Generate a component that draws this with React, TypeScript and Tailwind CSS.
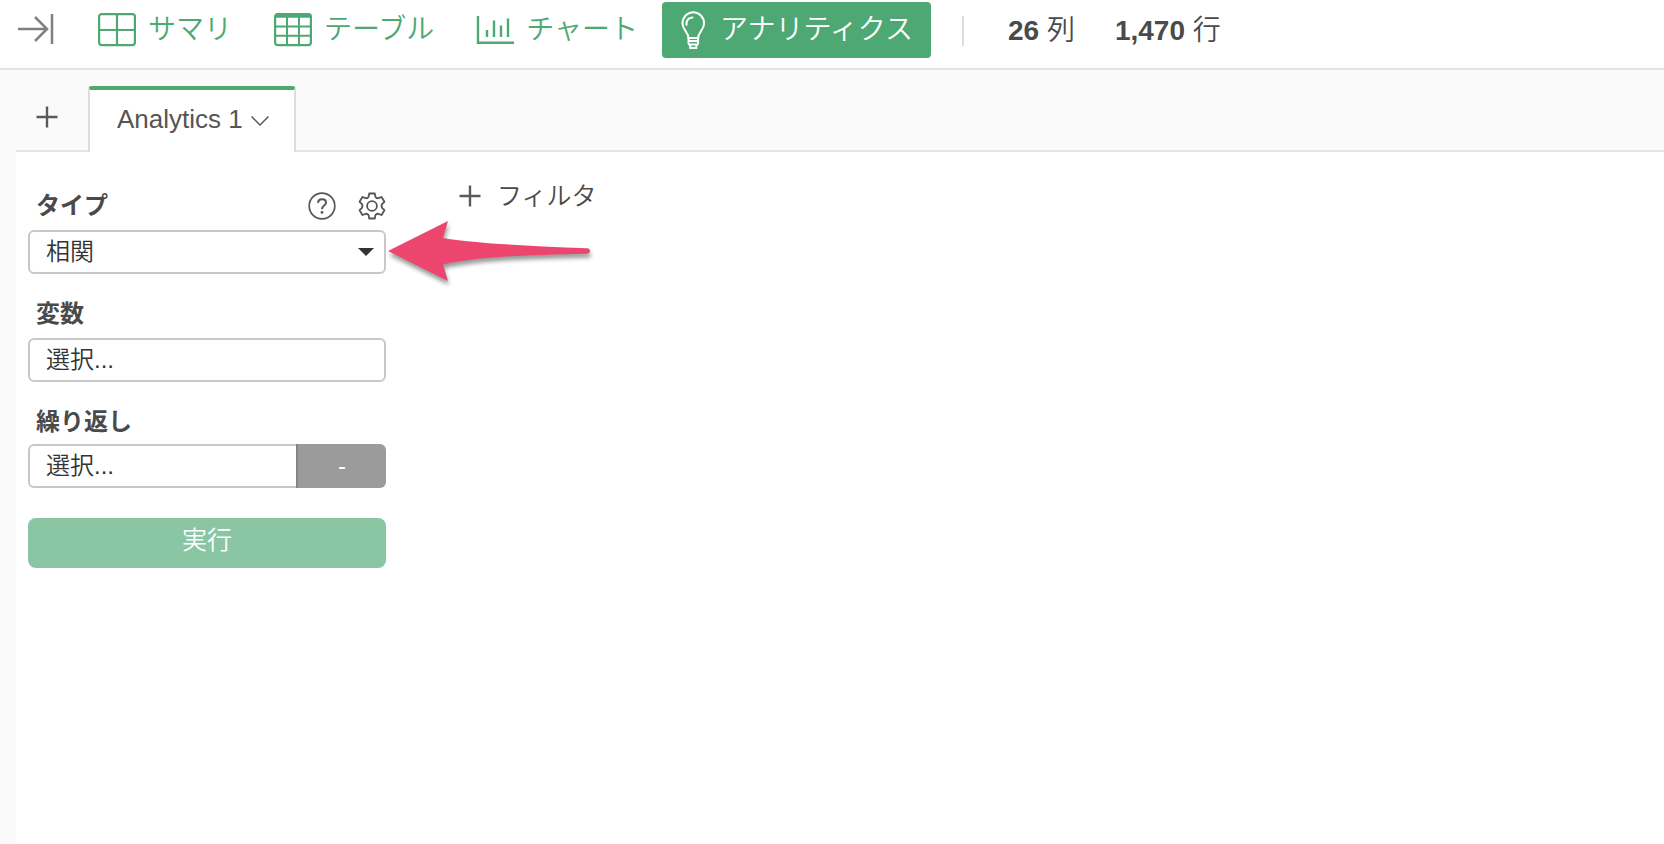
import { useState } from "react";

const NAV_ITEMS = [
  { id: "summary", label: "サマリ", Icon: SummaryIcon },
  { id: "table", label: "テーブル", Icon: TableIcon },
  { id: "chart", label: "チャート", Icon: ChartIcon },
  { id: "analytics", label: "アナリティクス", Icon: BulbIcon },
];

// ---------- icons ----------
function CollapseIcon() {
  return (
    <svg width="36" height="32" viewBox="0 0 36 32" fill="none" stroke="#808080" strokeWidth="2.5">
      <path d="M0 16H29M17 4L29 16L17 28M34 1V31" />
    </svg>
  );
}

function SummaryIcon() {
  return (
    <svg width="38" height="34" viewBox="0 0 38 34" fill="none" stroke="currentColor" strokeWidth="2.2">
      <rect x="1.1" y="1.1" width="35.8" height="31" rx="2.5" />
      <path d="M19 1.1V32.1M1.1 17H36.9" />
    </svg>
  );
}

function TableIcon() {
  return (
    <svg width="38" height="34" viewBox="0 0 38 34" fill="none" stroke="currentColor" strokeWidth="2">
      <rect x="1.1" y="1.1" width="35.8" height="31" rx="2.5" strokeWidth="2.2" />
      <path d="M1.6 2.8H36.4" strokeWidth="4" />
      <path d="M13 3V32M25 3V32M1.1 13.5H36.9M1.1 22.8H36.9" />
    </svg>
  );
}

function ChartIcon() {
  return (
    <svg width="38" height="34" viewBox="0 0 38 34" fill="none" stroke="currentColor" strokeWidth="2.4">
      <path d="M2 3V29.8H38" />
      <path d="M11 17V24M18 7.500V24M25 12.500V24M32 5.500V24" />
    </svg>
  );
}

function BulbIcon() {
  return (
    <svg width="28" height="40" viewBox="0 0 28 40" fill="none" stroke="currentColor" strokeWidth="2">
      <path d="M8.500 28C8.500 22 2.500 20 2.500 13.500A10.800 11.300 0 0 1 24.100 13.500C24.100 20 18.100 22 18.100 28Z" />
      <path d="M6.500 15C6.200 10.500 8.500 7.800 12.500 7.500" strokeLinecap="round" />
      <path d="M8.500 28V33.500L10.300 36V38H16.300V36L18.100 33.500V28M8.500 31H18M9 34.500H17.500" />
    </svg>
  );
}

function PlusIcon() {
  return (
    <svg width="22" height="22" viewBox="0 0 22 22" fill="none" stroke="#5a5a5a" strokeWidth="2.4">
      <path d="M11 0.5V21.5M0.5 11H21.5" />
    </svg>
  );
}

function HelpIcon() {
  return (
    <svg width="28" height="28" viewBox="0 0 28 28" fill="none" stroke="#555" strokeWidth="1.7">
      <circle cx="14" cy="14" r="12.8" />
      <path d="M10 10.8C10.2 8.4 11.8 7.3 14.1 7.3C16.4 7.3 18 8.7 18 10.7C18 13.6 14 13.5 14 17.2" strokeWidth="2" />
      <circle cx="14" cy="20.4" r="1.4" fill="#555" stroke="none" />
    </svg>
  );
}

function GearIcon() {
  return (
    <svg width="28" height="28" viewBox="0 0 28 28" fill="none" stroke="#555" strokeWidth="1.8" strokeLinejoin="round">
      <path d="M11.200 1.500H16.800L17.400 4.800C18.200 6.100 19.700 6.500 21 5.900L23.600 5L26.400 9.800L24.300 11.900C23.400 13.100 23.400 14.900 24.300 16.100L26.400 18.200L23.600 23L21 22.100C19.700 21.500 18.200 21.900 17.400 23.200L16.800 26.500H11.200L10.600 23.200C9.800 21.900 8.300 21.500 7 22.100L4.400 23L1.600 18.200L3.700 16.100C4.600 14.900 4.600 13.100 3.700 11.900L1.600 9.800L4.400 5L7 5.900C8.300 6.500 9.800 6.100 10.600 4.800Z" />
      <circle cx="14" cy="14" r="4.9" />
    </svg>
  );
}

function PointerArrow() {
  return (
    <svg
      className="pointer-events-none absolute top-full left-full -mt-14 overflow-visible drop-shadow-[1px_4px_2px_rgba(0,0,0,0.4)]"
      width="206"
      height="66"
      viewBox="0 0 206 66"
      fill="#ec466f"
    >
      <path d="M2 33L62 3L57 20C92 26 150 28 201 30.300C205 30.300 205 35.700 201 35.700C150 37 92 38 57 46.500L62 63Z" />
    </svg>
  );
}

// ---------- settings form ----------
const labelClass = "pl-2 text-2xl leading-8 font-bold text-[#4a4a4a]";
const fieldClass =
  "h-11 w-full border-2 border-[#c8c8c8] bg-white px-4 text-2xl leading-8 font-[350] text-[#333] placeholder:text-[#333] placeholder:opacity-100 outline-none";

function SettingsPanel() {
  const [type, setType] = useState("correlation");

  return (
    <form className="mt-2.5 flex w-[358px] shrink-0 flex-col" onSubmit={(e) => e.preventDefault()}>
      <div className="flex items-center justify-between">
        <label htmlFor="type" className={labelClass}>
          タイプ
        </label>
        <div className="flex gap-[22px]">
          <button type="button" aria-label="ヘルプ">
            <HelpIcon />
          </button>
          <button type="button" aria-label="設定">
            <GearIcon />
          </button>
        </div>
      </div>
      <div className="relative mt-2">
        <select
          id="type"
          value={type}
          onChange={(e) => setType(e.target.value)}
          className={`${fieldClass} appearance-none rounded-md`}
        >
          <option value="correlation">相関</option>
        </select>
        <svg
          className="pointer-events-none absolute top-[18px] right-3"
          width="16"
          height="8"
          viewBox="0 0 16 8"
          fill="#333"
        >
          <path d="M0 0H16L8 8Z" />
        </svg>
        <PointerArrow />
      </div>

      <label htmlFor="variables" className={`${labelClass} mt-6`}>
        変数
      </label>
      <input id="variables" placeholder="選択..." className={`${fieldClass} mt-2 rounded-md`} />

      <label htmlFor="repeat" className={`${labelClass} mt-6`}>
        繰り返し
      </label>
      <div className="mt-1.5 flex">
        <input
          id="repeat"
          placeholder="選択..."
          className={`${fieldClass} min-w-0 flex-1 rounded-l-md border-r-0`}
        />
        <button
          type="button"
          className="h-11 w-[90px] shrink-0 rounded-r-md border-l-2 border-[#858585] bg-[#9b9b9b] text-2xl leading-8 text-white"
        >
          -
        </button>
      </div>

      <button
        type="submit"
        className="mt-[30px] h-[50px] rounded-lg bg-[#8bc6a4] pb-1.5 text-[25px] leading-8 font-[350] text-white"
      >
        実行
      </button>
    </form>
  );
}

export default function App() {
  const [active, setActive] = useState("analytics");

  return (
    <div className="flex min-h-screen flex-col bg-[#fafafa] font-['Liberation_Sans','Noto_Sans_CJK_JP',sans-serif] text-[#4a4a4a]">
      <header className="flex h-[70px] items-start border-b-2 border-[#e5e5e5] bg-white pt-0.5 pl-[18px]">
        <button aria-label="パネルを閉じる" className="flex h-14 items-center pb-0.5">
          <CollapseIcon />
        </button>
        <nav className="ml-[26px] flex gap-1.5">
          {NAV_ITEMS.map(({ id, label, Icon }) => (
            <button
              key={id}
              onClick={() => setActive(id)}
              className={`flex h-14 items-center gap-3 rounded px-[18px] text-[28px] leading-8 font-[350] whitespace-nowrap ${
                active === id ? "bg-[#4ea873] text-white" : "text-[#4ea873]"
              }`}
            >
              <Icon />
              <span>{label}</span>
            </button>
          ))}
        </nav>
        <div className="mt-3.5 ml-[31px] h-[30px] w-0.5 bg-[#dcdcdc]" />
        <div className="flex h-14 items-center gap-10 pt-0.5 pl-11 text-[28px] leading-8 font-[350]">
          <span>
            <b className="font-bold">26</b> 列
          </span>
          <span>
            <b className="font-bold">1,470</b> 行
          </span>
        </div>
      </header>

      <main className="flex flex-1 flex-col pl-4">
        <div className="flex h-[82px] items-end border-b-2 border-[#e5e5e5]">
          <button aria-label="追加" className="mb-[22px] ml-5">
            <PlusIcon />
          </button>
          <button className="-mb-0.5 ml-[30px] flex h-[66px] items-center gap-2 rounded-t border-x-2 border-t-4 border-x-[#dcdcdc] border-t-[#4ea873] bg-white pr-[25px] pb-1 pl-[27px] text-[26px] leading-8 whitespace-nowrap text-[#555]">
            Analytics 1
            <svg className="mt-1" width="18" height="10" viewBox="0 0 18 10" fill="none" stroke="#5a5a5a" strokeWidth="1.5">
              <path d="M0.500 0.500L9 9L17.500 0.500" />
            </svg>
          </button>
        </div>

        <div className="flex flex-1 items-start gap-[73px] bg-white pt-7 pl-3">
          <SettingsPanel />
          <button className="flex items-center gap-4 text-[25px] leading-8 font-[350]">
            <PlusIcon />
            フィルタ
          </button>
        </div>
      </main>
    </div>
  );
}
